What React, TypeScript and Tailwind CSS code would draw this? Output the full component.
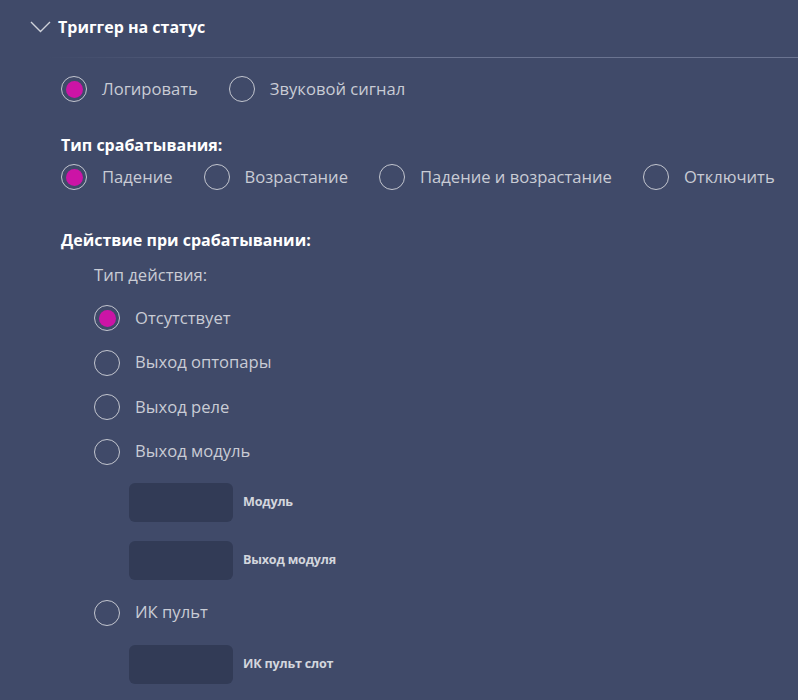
import React from 'react'

type RadioProps = {
  label: string
  checked?: boolean
}

function Radio({ label, checked = false }: RadioProps) {
  return (
    <div className="flex items-center h-[26px]">
      <span className="flex items-center justify-center w-[26px] h-[26px] shrink-0 rounded-full border-[1.5px] border-[#c3c6cf]">
        {checked && <span className="w-[17px] h-[17px] rounded-full bg-[#cc14a6]" />}
      </span>
      <span className="ml-[15px] text-[16.6px] leading-none text-[#c9ccd5] whitespace-nowrap">{label}</span>
    </div>
  )
}

function Field({ label, className = '' }: { label: string; className?: string }) {
  return (
    <div className={`flex items-center ml-[35px] ${className}`}>
      <div className="w-[104px] h-[39px] rounded-[6px] bg-[#323b56]" />
      <span className="ml-[10px] text-[12.6px] font-bold text-[#d3d6dd] tracking-[-0.2px]">{label}</span>
    </div>
  )
}

export default function App() {
  return (
    <main className="min-h-screen w-full bg-[#404a69] font-['Open_Sans',sans-serif] overflow-hidden">
      <div className="flex items-center h-[54px] pl-[30px]">
        <svg width="21" height="12" viewBox="0 0 21 12" fill="none" className="shrink-0">
          <path d="M1 1l9.5 9.5L20 1" stroke="#cfd2da" strokeWidth="1.4" />
        </svg>
        <span className="ml-[7px] text-[16px] font-bold text-white">Триггер на статус</span>
      </div>
      <div className="ml-[47px] h-px mt-[3px] bg-gradient-to-r from-[#404a69] via-[#6b7491] to-[#6b7491]" />

      <div className="pl-[61px]">
        <div className="flex gap-[31px] mt-[18px]">
          <Radio label="Логировать" checked />
          <Radio label="Звуковой сигнал" />
        </div>

        <div className="mt-[33px] h-[20px] flex items-center text-[16px] font-bold text-white">Тип срабатывания:</div>
        <div className="flex gap-[31px] mt-[9px]">
          <Radio label="Падение" checked />
          <Radio label="Возрастание" />
          <Radio label="Падение и возрастание" />
          <Radio label="Отключить" />
        </div>

        <div className="mt-[40px] h-[20px] flex items-center text-[16px] font-bold text-white">
          Действие при срабатывании:
        </div>

        <div className="pl-[33px]">
          <div className="mt-[15px] h-[20px] flex items-center text-[16.6px] text-[#c9ccd5]">Тип действия:</div>
          <div className="mt-[20px] flex flex-col gap-[18.5px]">
            <Radio label="Отсутствует" checked />
            <Radio label="Выход оптопары" />
            <Radio label="Выход реле" />
            <Radio label="Выход модуль" />
          </div>
          <Field label="Модуль" className="mt-[18px]" />
          <Field label="Выход модуля" className="mt-[19px]" />
          <div className="mt-[20px]">
            <Radio label="ИК пульт" />
          </div>
          <Field label="ИК пульт слот" className="mt-[19px]" />
        </div>
      </div>
    </main>
  )
}
